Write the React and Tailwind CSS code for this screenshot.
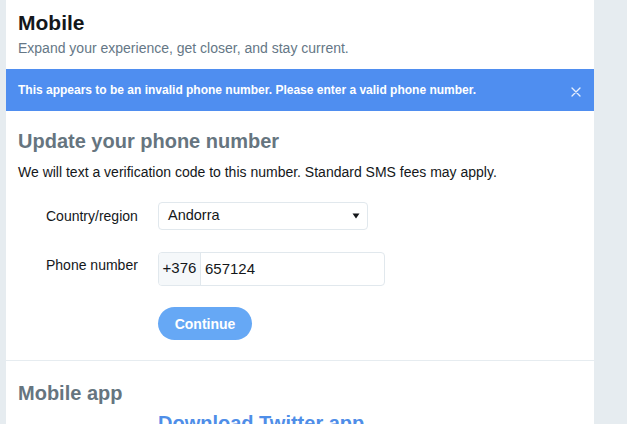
// App.jsx
export default function App() {
  return (
    <div className="flex h-[424px] w-full overflow-hidden bg-[#e6ecf0] pl-[6px] font-['Liberation_Sans',Arial,sans-serif]">
      <main className="w-[588px] shrink-0 bg-white">
        <header className="px-3 pt-[10px]">
          <h2 className="text-[21px] font-bold leading-[25px] text-[#14171a]">
            Mobile
          </h2>
          <p className="mt-[3px] text-sm leading-5 text-[#657786]">
            Expand your experience, get closer, and stay current.
          </p>
        </header>

        <div className="mt-[11px] flex h-[42px] items-center justify-between bg-[#4f8ef0] pl-3 pr-[13px]">
          <span className="text-xs font-bold text-white">
            This appears to be an invalid phone number. Please enter a valid
            phone number.
          </span>
          <svg width="10" height="10" viewBox="0 0 10 10" className="mt-[3px]">
            <path
              d="M1 1L9 9M9 1L1 9"
              stroke="#e8f0fd"
              strokeWidth="1.3"
              strokeLinecap="round"
            />
          </svg>
        </div>

        <section className="border-b border-[#e6ecf0] px-3 pb-5 pt-[18px]">
          <h3 className="text-xl font-bold leading-6 text-[#66757f]">
            Update your phone number
          </h3>
          <p className="mt-[9px] text-sm leading-5 text-[#14171a]">
            We will text a verification code to this number. Standard SMS fees
            may apply.
          </p>

          <div className="mt-5 flex items-start pl-7">
            <label className="w-[112px] shrink-0 pt-1 text-sm leading-5 text-[#14171a]">
              Country/region
            </label>
            <div className="flex h-[28px] w-[210px] items-center justify-between rounded border border-[#e1e8ed] pl-[9px] pr-[7px]">
              <span className="text-[14.5px] text-[#14171a]">Andorra</span>
              <svg width="8" height="6" viewBox="0 0 8 6">
                <path d="M0.5 0.5H7.5L4 5.5Z" fill="#14171a" />
              </svg>
            </div>
          </div>

          <div className="mt-[22px] flex items-start pl-7">
            <label className="w-[112px] shrink-0 pt-[3px] text-sm leading-5 text-[#14171a]">
              Phone number
            </label>
            <div className="flex h-[34px] w-[227px] overflow-hidden rounded border border-[#e1e8ed]">
              <span className="flex w-[42px] items-center justify-center border-r border-[#e1e8ed] bg-[#f5f8fa] pb-[2px] text-[15px] text-[#14171a]">
                +376
              </span>
              <span className="flex items-center pl-[4px] text-[15px] text-[#14171a]">
                657124
              </span>
            </div>
          </div>

          <div className="mt-[21px] pl-[140px]">
            <button className="h-[33px] w-[94px] rounded-full bg-[#66a8f5] text-sm font-bold text-white">
              Continue
            </button>
          </div>
        </section>

        <section className="px-3 pt-5">
          <h3 className="text-xl font-bold leading-6 text-[#66757f]">
            Mobile app
          </h3>
          <a className="ml-[140px] mt-[6px] block text-xl font-bold leading-6 text-[#4f8ee8]">
            Download Twitter app
          </a>
        </section>
      </main>
    </div>
  );
}
